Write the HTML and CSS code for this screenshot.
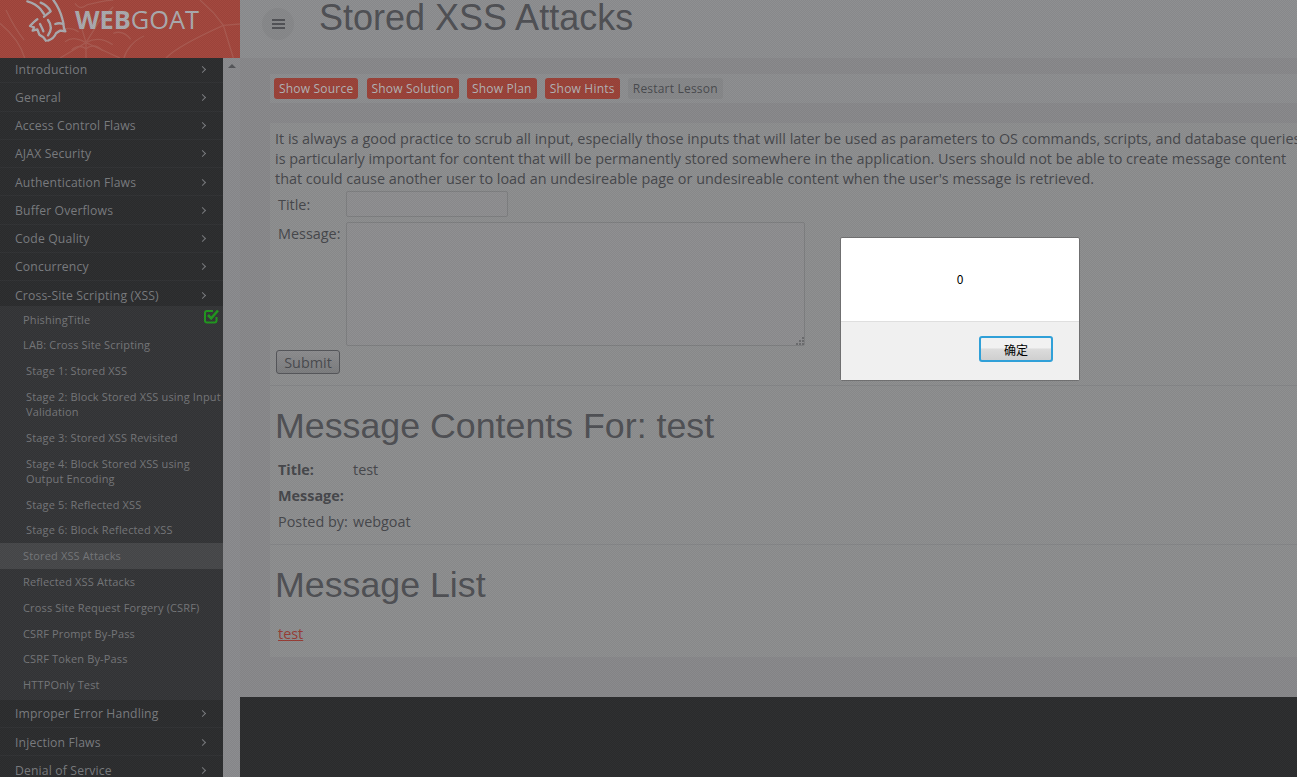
FILE: index.html
```html
<!DOCTYPE html>
<html lang="en">
<head>
<meta charset="utf-8">
<title>Stored XSS Attacks</title>
<link rel="stylesheet" href="styles.css">
</head>
<body>
<div class="page">
  <aside class="left">
    <div class="brand">
      <svg class="web" width="240" height="58" viewBox="0 0 720 174" fill="none">
        <g stroke="#aa5a51" stroke-width="4">
          <path d="M195 125C215 110 240 116 258 128C285 112 312 116 338 134"/>
          <path d="M215 150C230 136 246 138 258 146C275 134 292 136 308 152"/>
          <path d="M170 95C200 80 220 84 236 96M340 100C360 92 378 100 392 118"/>
          <path d="M258 174V128L238 60M258 128L300 60L340 20M258 128L360 174M258 128L180 174"/>
          <path d="M372 174C378 150 400 122 432 108"/>
          <path d="M498 174C520 150 590 112 670 76L720 72"/>
          <path d="M642 40L670 76L700 174M642 40L600 0"/>
          <path d="M18 30C32 60 48 90 72 120M0 70C30 95 60 125 74 174"/>
          <path d="M225 10C240 30 250 22 262 14C290 8 320 0 340 0"/>
        </g>
      </svg>
      <svg class="goat" width="60" height="50" viewBox="0 0 180 150" fill="none">
        <g stroke="#ababaf" stroke-width="7" stroke-linecap="round" stroke-linejoin="round">
          <path d="M22 4C36 8 50 14 62 28L72 42"/>
          <path d="M62 8C76 14 86 22 92 34L72 50"/>
          <path d="M100 0C112 16 122 36 128 60C132 72 128 82 136 94L120 92L108 100C104 110 95 118 84 122"/>
          <path d="M52 58C45 62 38 70 30 78L42 82L38 92L52 88L58 104L70 112L78 122"/>
          <path d="M84 60C96 76 94 92 84 106"/>
          <path d="M106 72C116 68 124 70 130 72"/>
          <path d="M60 72C64 80 68 86 70 94"/>
        </g>
      </svg>
      <span class="brand-name"><b>WEB</b>GOAT</span>
    </div>
    <div class="side-wrap">
      <nav class="sidebar">
        <a class="cat">Introduction<i class="chev"></i></a>
        <a class="cat">General<i class="chev"></i></a>
        <a class="cat">Access Control Flaws<i class="chev"></i></a>
        <a class="cat">AJAX Security<i class="chev"></i></a>
        <a class="cat">Authentication Flaws<i class="chev"></i></a>
        <a class="cat">Buffer Overflows<i class="chev"></i></a>
        <a class="cat">Code Quality<i class="chev"></i></a>
        <a class="cat">Concurrency<i class="chev"></i></a>
        <a class="cat">Cross-Site Scripting (XSS)<i class="chev"></i></a>
        <div class="subs">
          <a class="sub has-check">PhishingTitle
            <svg class="check" width="15" height="15" viewBox="0 0 15 15" fill="none"><path d="M12.5 8v3.5a2 2 0 0 1-2 2H3a2 2 0 0 1-2-2V4a2 2 0 0 1 2-2h6" stroke="#21981f" stroke-width="2"/><path d="M4 6l3.2 3.4L14 1.5" stroke="#21981f" stroke-width="2.6"/></svg>
          </a>
          <a class="sub">LAB: Cross Site Scripting</a>
          <a class="sub stage">Stage 1: Stored XSS</a>
          <a class="sub stage">Stage 2: Block Stored XSS using Input Validation</a>
          <a class="sub stage">Stage 3: Stored XSS Revisited</a>
          <a class="sub stage">Stage 4: Block Stored XSS using Output Encoding</a>
          <a class="sub stage">Stage 5: Reflected XSS</a>
          <a class="sub stage">Stage 6: Block Reflected XSS</a>
          <a class="sub active">Stored XSS Attacks</a>
          <a class="sub">Reflected XSS Attacks</a>
          <a class="sub">Cross Site Request Forgery (CSRF)</a>
          <a class="sub">CSRF Prompt By-Pass</a>
          <a class="sub">CSRF Token By-Pass</a>
          <a class="sub">HTTPOnly Test</a>
        </div>
        <a class="cat">Improper Error Handling<i class="chev"></i></a>
        <a class="cat">Injection Flaws<i class="chev"></i></a>
        <a class="cat">Denial of Service<i class="chev"></i></a>
      </nav>
      <div class="scrollbar"><i class="scroll-up"></i></div>
    </div>
  </aside>
  <main class="main">
    <header class="topbar">
      <button class="burger"><span></span><span></span><span></span></button>
      <h1 class="title">Stored XSS Attacks</h1>
    </header>
    <section class="content">
      <div class="toolbar">
        <a class="btn">Show Source</a>
        <a class="btn">Show Solution</a>
        <a class="btn">Show Plan</a>
        <a class="btn">Show Hints</a>
        <a class="btn restart">Restart Lesson</a>
      </div>
      <article class="lesson">
        <p class="intro">It is always a good practice to scrub all input, especially those inputs that will later be used as parameters to OS commands, scripts, and database queries. It<br>is particularly important for content that will be permanently stored somewhere in the application. Users should not be able to create message content<br>that could cause another user to load an undesireable page or undesireable content when the user's message is retrieved.</p>
        <div class="form">
          <label class="lbl lbl-title">Title:</label>
          <input class="field" type="text">
          <label class="lbl lbl-msg">Message:</label>
          <div class="area-wrap">
            <textarea class="area"></textarea>
            <svg class="grip" width="9" height="9" viewBox="0 0 9 9"><path d="M7 1h2v2H7zM4 4h2v2H4zM7 4h2v2H7zM1 7h2v2H1zM4 7h2v2H4zM7 7h2v2H7z" fill="#6b6c6e"/></svg>
          </div>
        </div>
        <button class="submit">Submit</button>
        <hr class="rule rule-1">
        <h2 class="heading">Message Contents For: test</h2>
        <dl class="details">
          <dt>Title:</dt><dd>test</dd>
          <dt>Message:</dt><dd></dd>
          <dt class="plain">Posted by:</dt><dd>webgoat</dd>
        </dl>
        <hr class="rule rule-2">
        <h2 class="heading heading-list">Message List</h2>
        <a class="msg-link">test</a>
      </article>
    </section>
    <footer class="footer"></footer>
  </main>
</div>
<div class="dim"></div>
<div class="dialog">
  <div class="dialog-body">0</div>
  <div class="dialog-foot"><button class="ok">确定</button></div>
</div>
</body>
</html>
```
FILE: styles.css
```css
* { box-sizing: border-box; }
html, body { margin: 0; height: 100%; overflow: hidden; }
body { font-family: "Open Sans", "Liberation Sans", sans-serif; font-size: 14.4px; color: #47484c; background: #8b8c8f; }
.page { display: grid; grid-template-columns: 240px 1fr; height: 777px; overflow: hidden; }

.left { display: flex; flex-direction: column; height: 777px; overflow: hidden; }
.brand { position: relative; height: 58px; background: #a3473d; display: flex; align-items: center; overflow: hidden; flex: none; }
.web { position: absolute; left: 0; top: 0; }
.goat { position: absolute; left: 20px; top: 0; }
.brand-name { position: absolute; left: 75px; top: 2px; font-size: 25.4px; line-height: 34px; color: #ababaf; }
.brand-name b { font-weight: 700; }

.side-wrap { display: flex; flex: 1; min-height: 0; }
.sidebar { width: 223px; flex: none; background: #2c2d2f; overflow: hidden; padding-top: 0; }
.scrollbar { width: 17px; flex: none; background: #8b8c8f; position: relative; }
.scroll-up { position: absolute; left: 5px; top: 6px; width: 0; height: 0; border-left: 4px solid transparent; border-right: 4px solid transparent; border-bottom: 4px solid #55565a; }

.cat { display: flex; align-items: center; justify-content: space-between; height: 28.25px; padding: 1px 18px 0 15px; font-size: 12.2px; letter-spacing: .15px; color: #7a7c7f; border-bottom: 1px solid #323335; white-space: nowrap; }
.cat:first-child { margin-top: -3px; }
.chev { width: 5px; height: 5px; border-top: 1px solid #7a7c7f; border-right: 1px solid #7a7c7f; transform: rotate(45deg); }
.subs { background: #353638; margin-top: -3px; padding-bottom: 2px; }
.sub { display: block; position: relative; font-size: 11px; line-height: 15px; padding: 5.42px 0 5.42px 23px; color: #75777a; letter-spacing: .15px; }
.stage { padding-left: 26px; }
.active { background: #48494b; }
.check { position: absolute; left: 204px; top: 3px; }

.main { display: flex; flex-direction: column; min-width: 0; height: 777px; overflow: hidden; }
.topbar { display: flex; align-items: flex-start; height: 58px; flex: none; background: #8e8f91; padding: 8px 0 0 22px; }
.burger { width: 32px; height: 32px; border: 0; border-radius: 50%; background: #88898b; display: flex; flex-direction: column; align-items: center; justify-content: center; gap: 2px; padding: 0; }
.burger span { width: 13px; height: 2px; background: #515256; }
.title { margin: -8px 0 0 25px; font: 400 36px/36px "Liberation Sans", Arial, sans-serif; color: #505155; white-space: nowrap; }

.content { flex: 1; min-height: 0; padding: 16px 0 0 30px; background: #89898c; }
.toolbar { display: flex; gap: 8.2px; height: 29px; padding: 4px; width: 1040px; background: #8e8f91; }
.btn { height: 21px; padding: 0 5px; border-radius: 3px; background: #9b4339; color: #b3b3b6; font-size: 12px; line-height: 21px; letter-spacing: .2px; white-space: nowrap; }
.restart { background: #87888a; color: #4a4b4f; }

.lesson { margin-top: 20px; width: 1040px; height: 534px; padding: 6px 5px 0; background: #8e8f90; }
.intro { margin: 0; font-size: 14.4px; line-height: 20px; white-space: nowrap; }
.form { display: grid; grid-template-columns: 71px auto; justify-content: start; row-gap: 5px; padding-top: 2px; }
.lbl { padding-left: 3px; }
.lbl-title { align-self: center; }
.lbl-msg { padding-top: 2px; }
.field { width: 162px; height: 26px; border: 1px solid #7e7f81; background: #8f8f91; border-radius: 2px; }
.area-wrap { position: relative; }
.area { width: 459px; height: 124px; border: 1px solid #7e7f81; background: #8f8f91; border-radius: 2px; display: block; resize: none; }
.grip { position: absolute; right: 1px; bottom: 1px; }
.submit { display: block; margin: 4px 0 0 1px; width: 64px; height: 24px; border: 1px solid #55565a; border-radius: 3px; background: linear-gradient(#8e8e90, #7d7e80); font: 14.4px "Open Sans", sans-serif; color: #4a4b4f; padding: 0; }
.rule { border: 0; border-top: 1px solid #858688; margin: 0 -5px; }
.rule-1 { margin-top: 11px; }
.rule-2 { margin-top: 10px; }
.heading { margin: 20px 0 0; font: 400 35.75px/40px "Liberation Sans", Arial, sans-serif; color: #505155; }
.heading-list { margin-top: 20px; }
.details { display: grid; grid-template-columns: 75px 1fr; grid-auto-rows: 26px; align-items: center; margin: 10px 0 0 3px; }
.details dt { font-weight: 700; }
.details dt.plain { font-weight: 400; }
.details dd { margin: 0; }
.msg-link { display: block; margin: 19px 0 0 3px; color: #983d36; text-decoration: underline; }

.footer { height: 80px; flex: none; background: #2c2d2f; }

.dim { position: fixed; inset: 0; background: repeating-conic-gradient(rgba(0,0,0,.045) 0 25%, rgba(255,255,255,.015) 0 50%) 0 0 / 2px 2px; pointer-events: none; }

.dialog { position: fixed; left: 840px; top: 237px; width: 240px; height: 144px; border: 1px solid #6f6f70; border-radius: 2px; background: #fff; font-family: "Noto Sans CJK SC", "Liberation Sans", sans-serif; font-size: 12px; color: #000; display: flex; flex-direction: column; }
.dialog-body { height: 83px; flex: none; display: flex; align-items: center; justify-content: center; padding-bottom: 2px; }
.dialog-foot { flex: 1; background: #f0f0f0; border-top: 1px solid #dfdfdf; display: flex; justify-content: flex-end; align-items: flex-start; padding: 14px 26px 0 0; }
.ok { width: 74px; height: 26px; padding: 0; border: 2px solid #30a0d8; border-radius: 3px; background: linear-gradient(#f1f1f1 0 45%, #dcdcdc 50%, #cfcfcf); font: 12px "Noto Sans CJK SC", sans-serif; color: #000; }
```
